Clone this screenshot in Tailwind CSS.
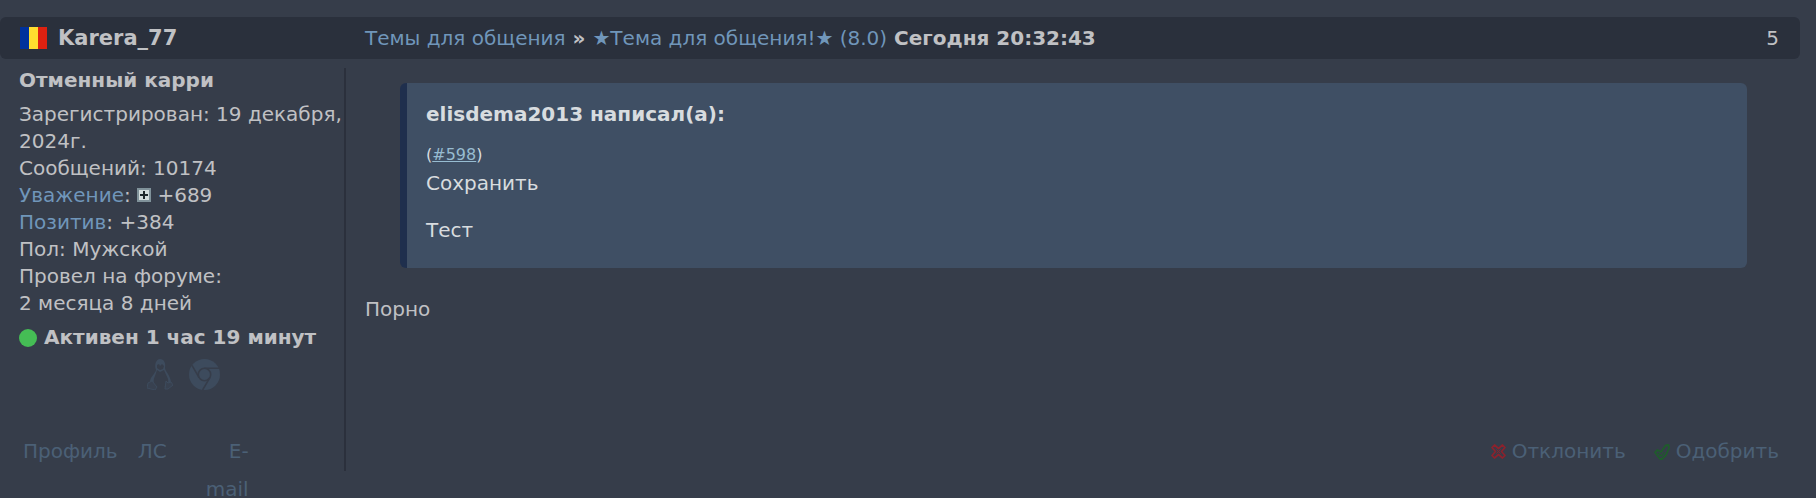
<!DOCTYPE html>
<html lang="ru">
<head>
    <meta charset="UTF-8">
    <meta name="viewport" content="width=device-width, initial-scale=1">
    <title>Темы для общения</title>
    <script src="https://cdn.jsdelivr.net/npm/@tailwindcss/browser@4"></script>
</head>
<body class="min-h-screen bg-[#363d4a] font-['DejaVu_Sans',sans-serif] text-[20px] leading-[27px] text-[#c0c1c4] overflow-hidden">
    <article class="pt-[17px] pr-4">
        <!-- Post header -->
        <header class="flex items-center h-[42px] rounded-md bg-[#2a303c] pl-5 pr-[21px]">
            <div class="flex items-center gap-[11px] w-[345px] shrink-0">
                <svg class="w-[27px] h-[22px] shrink-0" viewBox="0 0 27 22" role="img" aria-label="Румыния">
                    <path fill="#00319c" d="M0 0h9v22H0z"/>
                    <path fill="#ffde2f" d="M9 0h9v22H9z"/>
                    <path fill="#de2110" d="M18 0h9v22h-9z"/>
                </svg>
                <h2 class="text-[21px] font-bold">Karera_77</h2>
            </div>
            <h3 class="flex-1 font-bold">
                <a href="#" class="font-normal text-[#7096ba]">Темы для общения</a> »
                <a href="#" class="font-normal text-[#7096ba]">★Тема для общения!★ (8.0)</a>
                Сегодня 20:32:43
            </h3>
            <span>5</span>
        </header>

        <div class="flex pt-[9px]">
            <!-- Author -->
            <aside class="flex flex-col w-[346px] shrink-0 border-r-2 border-[#2b303c] pl-[19px]">
                <p class="font-bold leading-[25px] mb-2">Отменный карри</p>
                <ul>
                    <li>Зарегистрирован: 19 декабря, 2024г.</li>
                    <li>Сообщений: 10174</li>
                    <li>
                        <a href="#" class="text-[#7096ba]">Уважение</a>:
                        <svg class="inline-block w-[14px] h-[14px] align-baseline" viewBox="0 0 14 14">
                            <path fill="#80929a" d="M0 0h14v14H0z"/>
                            <path fill="#d2dcdc" d="M2 2h10v10H2z"/>
                            <path stroke="#1c262a" stroke-width="2" d="M7 3v8M3 7h8"/>
                        </svg>
                        +689
                    </li>
                    <li><a href="#" class="text-[#7096ba]">Позитив</a>: +384</li>
                    <li>Пол: Мужской</li>
                    <li>Провел на форуме:<br>2 месяца 8 дней</li>
                </ul>
                <p class="flex items-center gap-[7px] mt-[7px] font-bold">
                    <span class="size-[18px] rounded-full bg-[#45bd55]"></span>Активен 1 час 19 минут
                </p>
                <div class="flex justify-center gap-4 mt-2 pl-[3px]">
                    <svg class="w-[26px] h-[31px]" viewBox="0 0 26 31" fill="none" stroke="#3d4b5d" stroke-width="1">
                        <path fill="#3d4b5d" stroke="none" d="M9 11C7 6 9 0 13 0s6 4 5 9c0 3 6 8 6 15l-5 4H7l-4-5c0-5 5-8 6-12z"/>
                        <path fill="#363d4a" stroke="none" d="M10 11l3 2 4-2 4 9c1 5-1 7-4 8h-7c-4-3-4-7-2-11zM10 6l2-1 1 2 2-2 2 2-1 3-3 1-3-2z"/>
                        <path fill="#384150" d="M1 24l4-2 5 6-2 3-8-2zM19 22l2 2 3-1 2 3-5 4h-3z"/>
                    </svg>
                    <svg class="size-[31px]" viewBox="0 0 31 31" fill="none">
                        <circle cx="15.5" cy="15.5" r="15.5" fill="#3d4b5d"/>
                        <circle cx="15.5" cy="15.5" r="6.2" stroke="#363d4a" stroke-width="1.6"/>
                        <path stroke="#363d4a" stroke-width="1.6" d="M15.500 9.300H30M10.100 18.600L3 6.400M20.900 18.600L13.600 31"/>
                    </svg>
                </div>
                <!-- The last link runs on below the column rule -->
                <nav class="flex gap-5 mt-[42px] -mb-[37px] pl-1 leading-[38px] text-[#4b6076]">
                    <a href="#">Профиль</a>
                    <a href="#">ЛС</a>
                    <a href="#" class="w-[62px] text-right">E-<br>mail</a>
                </nav>
            </aside>

            <!-- Message -->
            <div class="flex flex-col flex-1 pl-[19px] pr-[21px]">
                <blockquote class="mt-[15px] ml-[35px] mr-8 rounded-md border-l-[7px] border-[#1f2f4d] bg-[#3f4f64] pl-[19px] pt-[18px] pb-6 text-[#d8dcdf]">
                    <cite class="block not-italic font-bold">elisdema2013 написал(а):</cite>
                    <p class="mt-[15px] text-base leading-[24px]">(<a href="#" class="text-[#97bcd1] underline">#598</a>)</p>
                    <p class="mt-[3px]">Сохранить</p>
                    <p class="mt-5">Тест</p>
                </blockquote>
                <p class="mt-7">Порно</p>
                <div class="flex justify-end gap-7 mt-auto mb-[6px] text-[#4b6076]">
                    <button type="button" class="flex items-center gap-[6px]">
                        <svg class="size-[15px]" viewBox="0 0 15 15" fill="none" stroke="#8b222d" stroke-width="1.7" stroke-linejoin="round">
                            <path d="M1 3.500L3.500 1 7.500 4.500 11.500 1 14 3.500 10.500 7.500 14 11.500 11.500 14 7.500 10.500 3.500 14 1 11.500 4.500 7.500z"/>
                            <path stroke-width="1" d="M5.500 5.500l4 4M9.500 5.500l-4 4"/>
                        </svg>
                        Отклонить
                    </button>
                    <button type="button" class="flex items-center gap-[6px]">
                        <svg class="size-4" viewBox="0 0 16 16" fill="none" stroke="#1f5c2c" stroke-width="1.8" stroke-linejoin="round">
                            <path d="M1 8.500L3.500 6 7 8 11.500 1.500l3-.5.500 3-3 7-4 4-2 0z"/>
                            <path stroke-width="1.200" d="M4 9l3.500 3 3-4"/>
                        </svg>
                        Одобрить
                    </button>
                </div>
            </div>
        </div>
    </article>
</body>
</html>
